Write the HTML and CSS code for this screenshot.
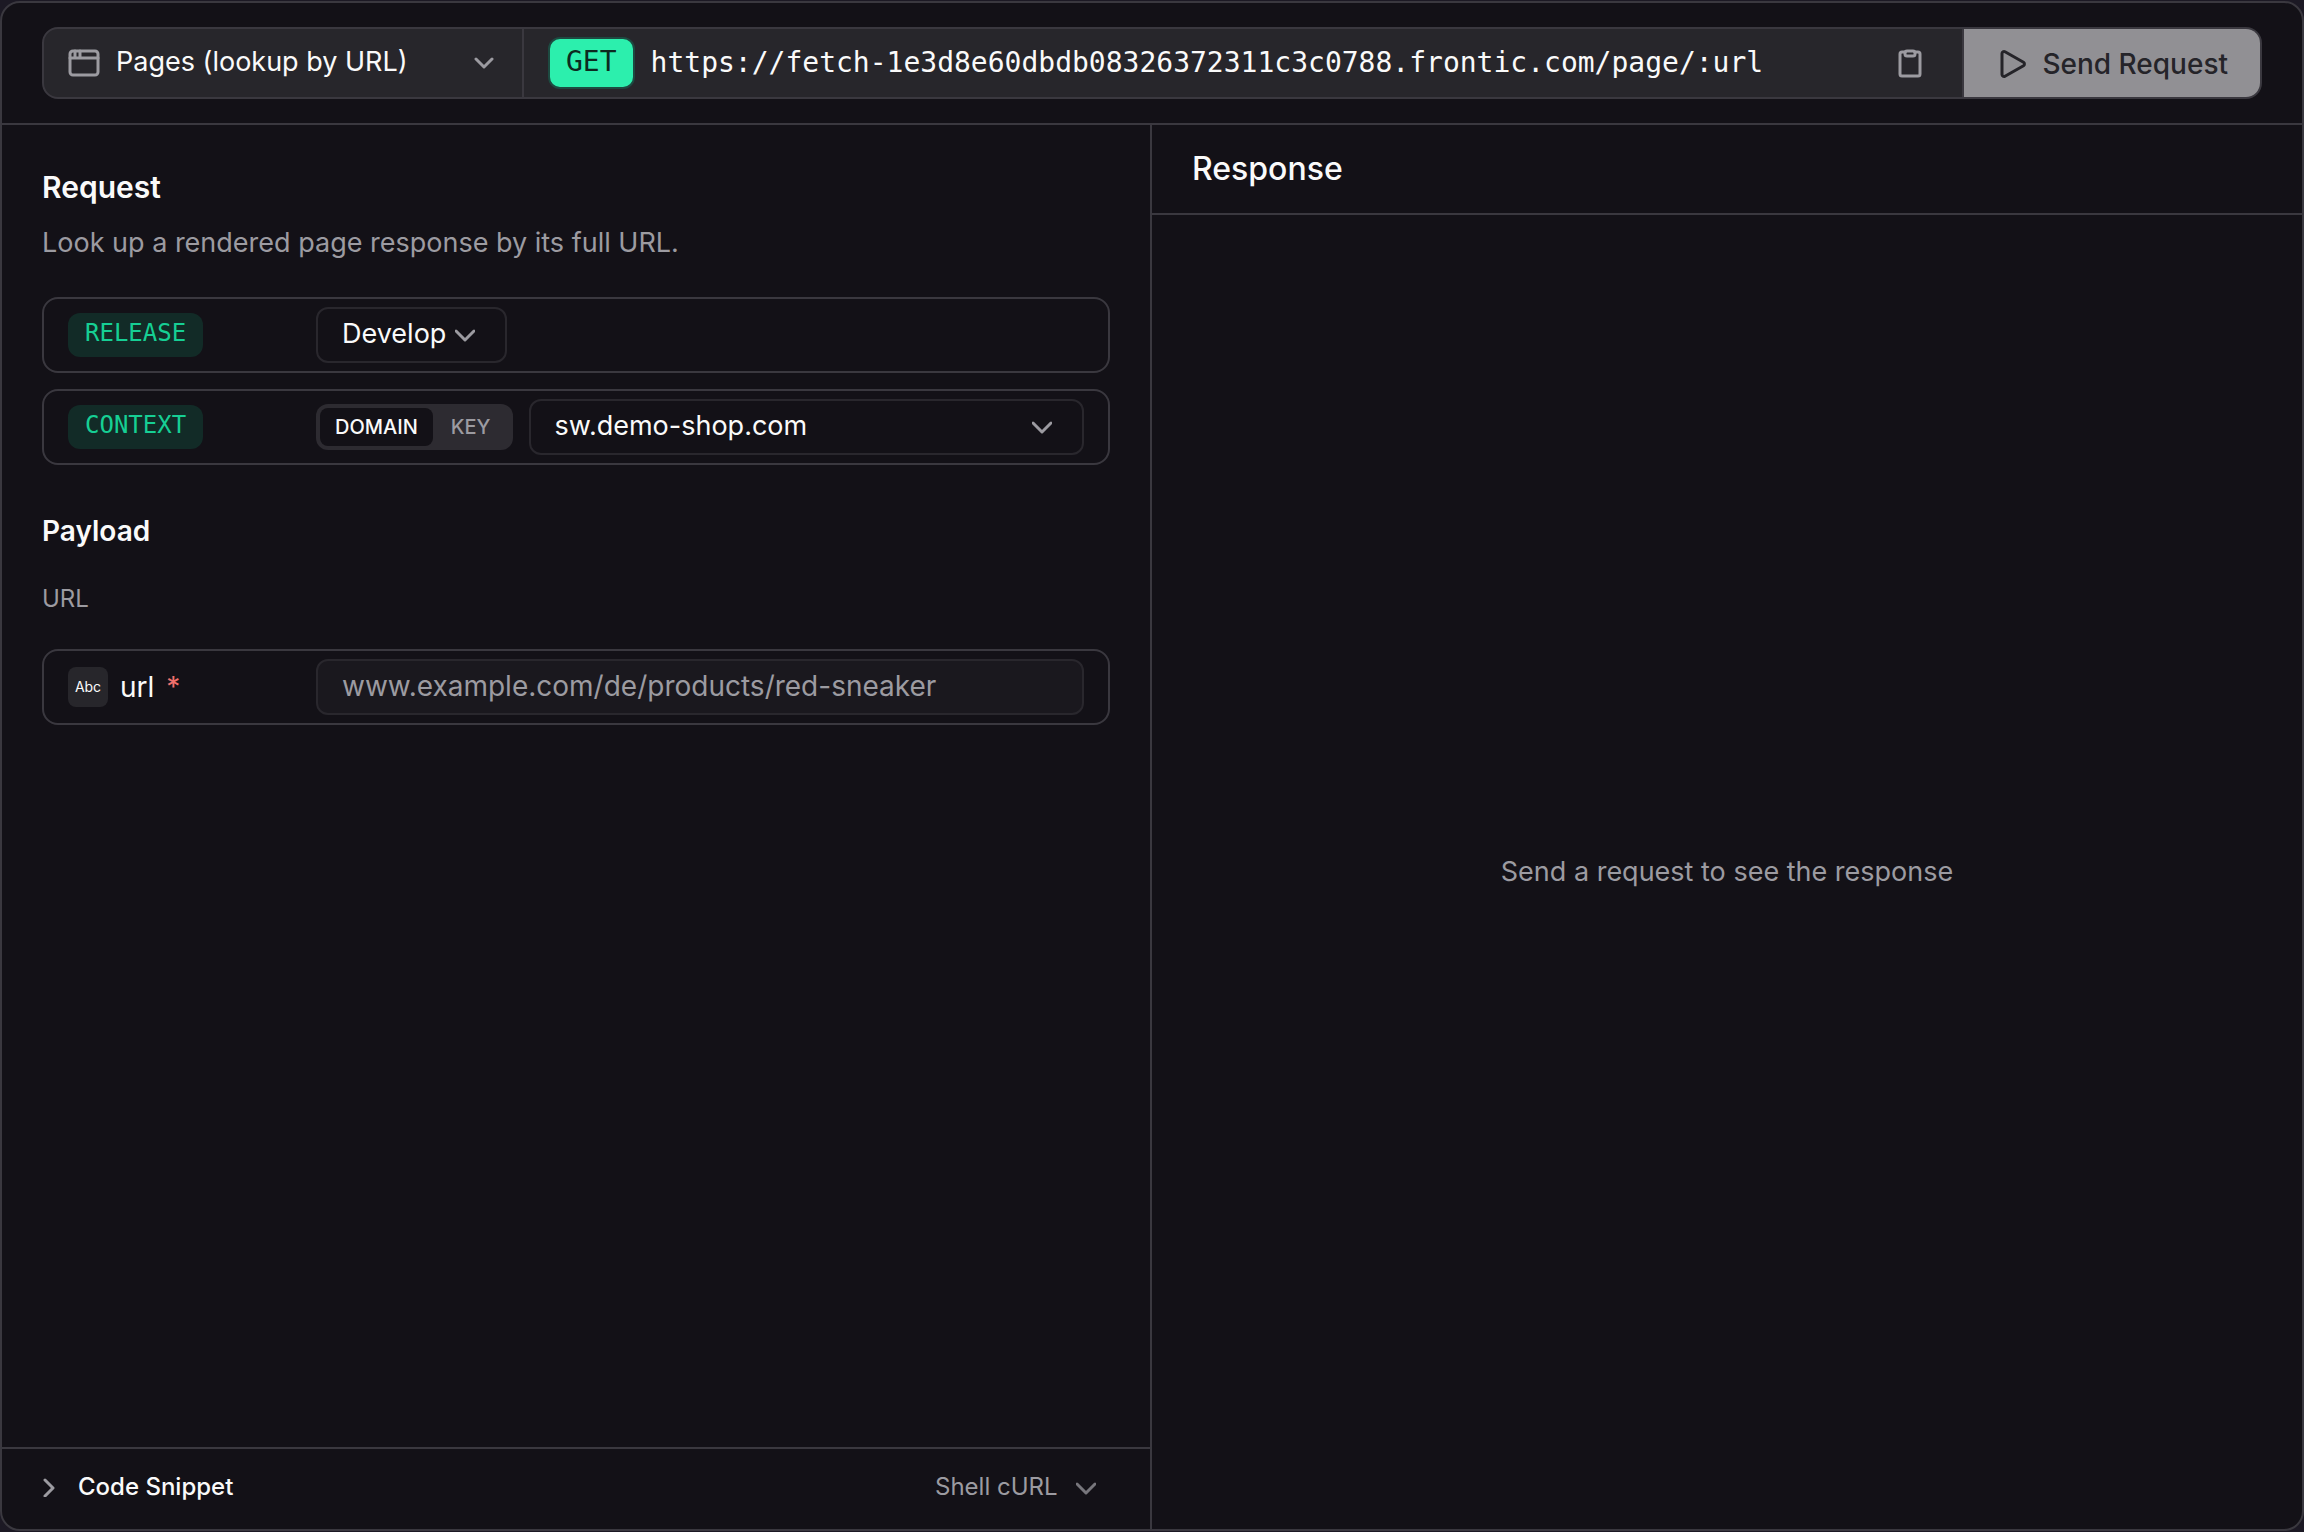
FILE: index.html
```html
<!DOCTYPE html>
<html lang="en">
<head>
<meta charset="utf-8">
<meta name="viewport" content="width=device-width, initial-scale=1">
<title>API Playground</title>
<link rel="stylesheet" href="styles.css">
</head>
<body>
<main class="playground">
  <header class="topbar">
    <form class="request-bar" id="request-form">
      <div class="select endpoint">
        <svg class="endpoint-icon" viewBox="0 0 32 32" width="32" height="32" aria-hidden="true"><rect x="2" y="4" width="28" height="24" rx="3"/><path d="M2 11h28M7 4v7M12 4v7"/></svg>
        <select class="select-input" aria-label="Endpoint"><option>Pages (lookup by URL)</option></select>
        <svg class="chevron" viewBox="0 0 20 20" width="20" height="20" aria-hidden="true"><path d="M2 6l8 8 8-8"/></svg>
      </div>
      <div class="url-bar">
        <span class="method">GET</span>
        <input class="url-input" type="text" readonly aria-label="Request URL" value="https://fetch-1e3d8e60dbdb08326372311c3c0788.frontic.com/page/:url">
        <button class="icon-button" type="button" aria-label="Copy URL">
          <svg viewBox="0 0 32 32" width="32" height="32" aria-hidden="true"><path d="M11 5H8a2 2 0 0 0-2 2v20a2 2 0 0 0 2 2h16a2 2 0 0 0 2-2V7a2 2 0 0 0-2-2h-3"/><rect x="11" y="4" width="10" height="5" rx="2"/></svg>
        </button>
      </div>
      <button class="send" type="submit" disabled>
        <svg viewBox="0 0 32 32" width="32" height="32" aria-hidden="true"><path d="M4 5.500v21a2 2 0 0 0 3 1.700l18.500-10.500a2 2 0 0 0 0-3.400L7 3.800a2 2 0 0 0-3 1.700z"/></svg>
        Send Request
      </button>
    </form>
  </header>
  <div class="panes">
    <section class="pane request-pane">
      <div class="request-body">
        <h2 class="title">Request</h2>
        <p class="description">Look up a rendered page response by its full URL.</p>
        <div class="rows">
          <div class="row">
            <label class="tag" for="release">RELEASE</label>
            <div class="select release">
              <select class="select-input boxed" id="release"><option>Develop</option></select>
              <svg class="chevron" viewBox="0 0 20 20" width="20" height="20" aria-hidden="true"><path d="M1 6l9 9 9-9"/></svg>
            </div>
          </div>
          <div class="row">
            <label class="tag" for="context">CONTEXT</label>
            <div class="context">
              <div class="toggle" role="radiogroup" aria-label="Context type">
                <label class="toggle-item"><input class="toggle-radio" type="radio" name="context-type" checked>DOMAIN</label>
                <label class="toggle-item"><input class="toggle-radio" type="radio" name="context-type">KEY</label>
              </div>
              <div class="select domain">
                <select class="select-input boxed" id="context"><option>sw.demo-shop.com</option></select>
                <svg class="chevron" viewBox="0 0 20 20" width="20" height="20" aria-hidden="true"><path d="M1 6l9 9 9-9"/></svg>
              </div>
            </div>
          </div>
        </div>
        <h3 class="subtitle">Payload</h3>
        <h4 class="group">URL</h4>
        <div class="row">
          <label class="field-name" for="url"><span class="type">Abc</span>url<span class="required">*</span></label>
          <input class="text-input" id="url" type="text" placeholder="www.example.com/de/products/red-sneaker">
        </div>
      </div>
      <footer class="snippet">
        <button class="snippet-toggle" type="button" aria-expanded="false">
          <svg viewBox="0 0 20 20" width="20" height="20" aria-hidden="true"><path d="M3 3l8 8-8 8"/></svg>
          Code Snippet
        </button>
        <div class="select language">
          <select class="select-input" aria-label="Snippet language"><option>Shell cURL</option></select>
          <svg class="chevron" viewBox="0 0 20 20" width="20" height="20" aria-hidden="true"><path d="M1 7l9 9 9-9"/></svg>
        </div>
      </footer>
    </section>
    <section class="pane response-pane">
      <h2 class="response-title">Response</h2>
      <p class="empty">Send a request to see the response</p>
    </section>
  </div>
</main>
</body>
</html>
```
FILE: styles.css
```css
:root {
  --bg: #131117;
  --line: #3a383f;
  --line-soft: #29272d;
  --surface: #27262b;
  --text: #fafafa;
  --muted: #9c9ba1;
  --sans: Inter, "Liberation Sans", sans-serif;
  --mono: "DejaVu Sans Mono", "Liberation Mono", monospace;
}

*, *::before, *::after { box-sizing: border-box; }

body {
  margin: 0;
  background: #1c1924;
  color: var(--text);
  font: 400 27px/40px var(--sans);
}

h2, h3, h4, p { margin: 0; }

button, input, select {
  margin: 0;
  padding: 0;
  border: 0;
  background: none;
  color: inherit;
  font: inherit;
}

svg {
  flex: none;
  fill: none;
  stroke: var(--muted);
  stroke-width: 3;
  stroke-linecap: round;
  stroke-linejoin: round;
}

.playground {
  display: flex;
  flex-direction: column;
  min-height: calc(100vh - 2px);
  margin: 1px 0;
  border: 2px solid var(--line);
  border-radius: 20px;
  background: var(--bg);
  overflow: hidden;
}

/* Top bar */
.topbar {
  padding: 24px 40px;
  border-bottom: 2px solid var(--line);
}

.request-bar {
  display: flex;
  height: 72px;
  border: 2px solid var(--line);
  border-radius: 16px;
  background: var(--surface);
  overflow: hidden;
}

.select {
  display: grid;
  align-items: center;
}

.select-input {
  grid-area: 1 / 1;
  width: 100%;
  height: 100%;
  appearance: none;
}

.select .chevron {
  grid-area: 1 / 1;
  justify-self: end;
  pointer-events: none;
}

.endpoint {
  width: 480px;
  border-right: 2px solid var(--line);
}

.endpoint .select-input { padding: 0 60px 2px 72px; }
.endpoint .chevron { margin-right: 28px; }

.endpoint-icon {
  grid-area: 1 / 1;
  margin-left: 24px;
}

.url-bar {
  display: flex;
  flex: 1;
  align-items: center;
  gap: 16px;
  min-width: 0;
  padding: 0 36px 0 24px;
}

.method {
  padding: 3px 16px 5px;
  border: 2px solid #1d4a41;
  border-radius: 12px;
  background: #2cefad;
  color: #0c2a20;
  font-family: var(--mono);
  font-size: 28px;
}

.url-input {
  flex: 1;
  min-width: 0;
  height: 100%;
  padding-bottom: 2px;
  font-family: var(--mono);
  font-size: 28px;
}

.icon-button { display: flex; }

.send {
  display: flex;
  align-items: center;
  gap: 12px;
  padding: 2px 32px 0 34px;
  border-left: 2px solid var(--line);
  background: #919094;
  color: #252429;
  font-size: 28px;
  font-weight: 500;
}

.send svg { stroke: #252429; }

/* Panes */
.panes {
  display: grid;
  flex: 1;
  grid-template-columns: 1fr 1fr;
}

.pane {
  display: flex;
  flex-direction: column;
  min-width: 0;
}

.request-pane { border-right: 2px solid var(--line); }

.request-body {
  flex: 1;
  padding: 40px;
}

.title {
  font-size: 30px;
  font-weight: 600;
  line-height: 44px;
}

.description {
  margin-top: 16px;
  color: var(--muted);
  line-height: 36px;
}

.rows {
  display: grid;
  gap: 16px;
  margin-top: 36px;
}

.row {
  display: grid;
  grid-template-columns: 248px 1fr;
  align-items: center;
  height: 76px;
  padding: 0 24px;
  border: 2px solid var(--line);
  border-radius: 16px;
}

.tag {
  justify-self: start;
  padding: 4px 17px 8px;
  border-radius: 12px;
  background: #122b27;
  color: #16cf94;
  font: 400 24px/32px var(--mono);
}

.boxed, .text-input {
  width: 100%;
  height: 56px;
  border: 2px solid var(--line-soft);
  border-radius: 12px;
}

.boxed { padding: 0 58px 2px 24px; }

.release { justify-self: start; }
.release .chevron { margin-right: 32px; }

.context {
  display: flex;
  align-items: center;
  gap: 16px;
}

.toggle {
  display: flex;
  padding: 4px;
  border-radius: 12px;
  background: #2d2b31;
}

.toggle-item {
  padding: 3px 18px;
  border-radius: 8px;
  color: var(--muted);
  font-size: 20px;
  font-weight: 500;
  line-height: 32px;
}

.toggle-item:has(:checked) {
  padding-inline: 15px;
  background: var(--bg);
  color: var(--text);
}

.toggle-radio {
  position: absolute;
  opacity: 0;
  pointer-events: none;
}

.domain { flex: 1; }
.domain .chevron { margin-right: 32px; }

.subtitle {
  margin-top: 46px;
  font-size: 28px;
  font-weight: 600;
}

.group {
  margin: 32px 0 34px;
  color: var(--muted);
  font-size: 24px;
  font-weight: 400;
  line-height: 32px;
}

.field-name {
  display: flex;
  align-items: center;
  gap: 12px;
  font-size: 28px;
}

.type {
  width: 40px;
  border-radius: 8px;
  background: var(--surface);
  font-size: 14px;
  text-align: center;
}

.required { color: #f0706c; }

.text-input {
  padding: 0 24px 2px;
  background: #1a181e;
  font-size: 28px;
}

.text-input::placeholder {
  color: var(--muted);
  opacity: 1;
}

/* Code snippet bar */
.snippet {
  display: flex;
  align-items: center;
  justify-content: space-between;
  height: 82px;
  padding: 0 54px 4px 40px;
  border-top: 2px solid var(--line);
  font-size: 24px;
}

.snippet-toggle {
  display: flex;
  align-items: center;
  gap: 16px;
  font-weight: 500;
}

.language .select-input {
  padding-right: 38px;
  color: var(--muted);
}

.language .chevron { stroke: #77767c; }

/* Response */
.response-title {
  padding: 24px 40px;
  border-bottom: 2px solid var(--line);
  font-size: 32px;
  font-weight: 500;
}

.empty {
  display: grid;
  flex: 1;
  place-items: center;
  color: var(--muted);
}
```
